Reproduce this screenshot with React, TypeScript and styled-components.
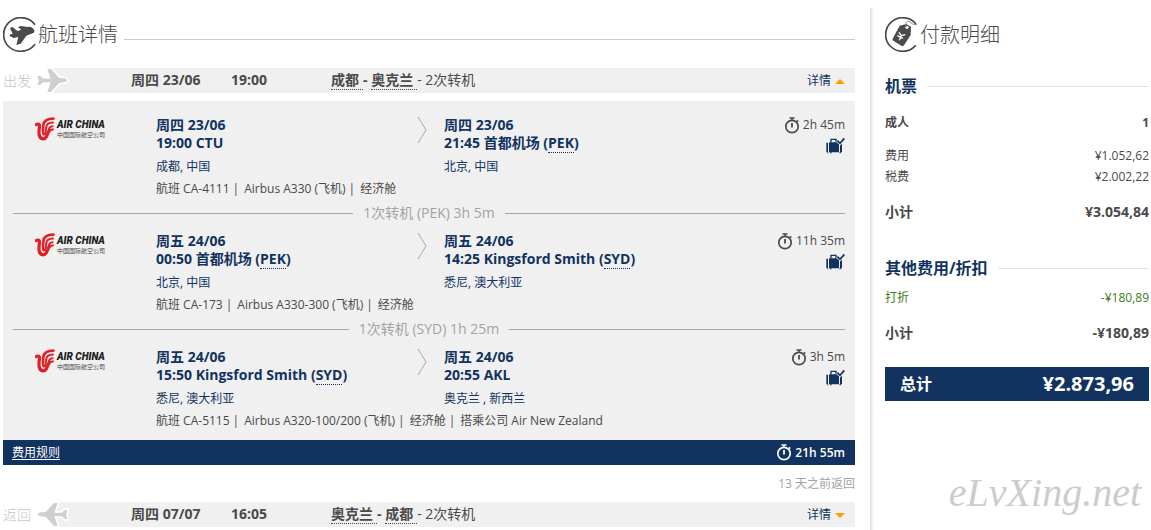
import React, { useState } from "react";
import styled, { createGlobalStyle } from "styled-components";

const navy = "#12335f";
const ink = "#4a4a4a";
const panel = "#f0f0f0";

const GlobalStyle = createGlobalStyle`
  * { box-sizing: border-box; }
  body {
    margin: 0;
    background: #fff;
    color: ${ink};
    font-family: "Open Sans", "Noto Sans CJK SC", sans-serif;
    font-size: 12px;
    line-height: 18px;
  }
`;

const Page = styled.div`
  display: grid;
  grid-template-columns: minmax(0, 1fr) 281px;
  column-gap: 15px;
  min-height: 100vh;
  padding-left: 3px;
`;

const Main = styled.main`
  padding-top: 17px;
`;

const Sidebar = styled.aside`
  margin-top: 8px;
  padding: 9px 2px 0 15px;
  background: linear-gradient(to right, #dedede, #fff) left top / 4px 100% no-repeat;
`;

const TitleRow = styled.header`
  display: flex;
  align-items: center;
  gap: 2px;
  height: 35px;
`;

const Title = styled.h1`
  margin: 0;
  font-size: 20px;
  font-weight: 300;
  line-height: 30px;
  white-space: nowrap;
`;

const TitleRule = styled.span`
  flex: 1;
  height: 1px;
  margin: 10px 0 0 4px;
  background: #ccc;
`;

const BoundRow = styled.div`
  display: flex;
  align-items: center;
  height: 25px;
  padding-right: 10px;
  background: linear-gradient(${panel}, ${panel}) right / calc(100% - 49px) 100% no-repeat;
  font-size: 14px;
  line-height: 24px;
  white-space: nowrap;
`;

const Outbound = styled(BoundRow)`
  margin-top: 16px;
`;

const Direction = styled.span`
  display: flex;
  align-items: center;
  gap: 5px;
  width: 128px;
  color: #c4c4c4;
  font-weight: 300;
`;

const When = styled.strong`
  width: 100px;
  line-height: 22px;
  padding-bottom: 2px;
`;

const Route = styled.span`
  flex: 1;
  padding-bottom: 2px;
`;

const Code = styled.abbr`
  border-bottom: 1px dotted currentColor;
  text-decoration: none;
`;

const Place = styled(Code)`
  display: inline-block;
  height: 20px;
  line-height: 20px;
  padding-right: 4px;
`;

const Toggle = styled.button<{ $open: boolean }>`
  display: flex;
  align-items: center;
  gap: 4px;
  padding: 0;
  border: 0;
  background: none;
  color: ${navy};
  font: inherit;
  font-size: 12px;
  cursor: pointer;

  &::after {
    content: "";
    margin-top: 2px;
    border: 5px solid transparent;
    border-top-width: ${(p) => (p.$open ? 0 : 5)}px;
    border-bottom-width: ${(p) => (p.$open ? 5 : 0)}px;
    border-top-color: ${(p) => (p.$open ? "transparent" : "#ff9c00")};
    border-bottom-color: ${(p) => (p.$open ? "#ff9c00" : "transparent")};
  }
`;

const Legs = styled.section`
  margin-top: 8px;
  padding: 15px 10px 10px;
  background: ${panel};
`;

const Leg = styled.article`
  display: grid;
  grid-template-columns: 143px minmax(0, 288fr) minmax(0, 401fr);
`;

const Carrier = styled.div`
  padding-left: 22px;
`;

const Departure = styled.div`
  display: flex;
  justify-content: space-between;
  padding-right: 17px;
`;

const Arrival = styled.div`
  display: flex;
  justify-content: space-between;
`;

const Stop = styled.p`
  margin: 0;
  color: ${navy};
  font-size: 14px;
  font-weight: 700;
`;

const City = styled.p`
  margin: 6px 0 0;
  color: ${navy};
`;

const Facts = styled.div`
  display: flex;
  flex-direction: column;
  align-items: flex-end;
  gap: 3px;
`;

const Time = styled.span`
  display: flex;
  align-items: center;
  gap: 3px;
  height: 18px;
  white-space: nowrap;
`;

const FlightLine = styled.p`
  grid-column: 2 / -1;
  margin: 4px 0 0;
`;

const Part = styled.span`
  & + &::before {
    content: "|";
    margin: 0 5px 0 3px;
  }
`;

const Transfer = styled.div`
  display: flex;
  align-items: center;
  gap: 10px;
  height: 18px;
  margin: 6px 0 10px;
  color: #a3a3a3;
  font-size: 14px;

  &::before,
  &::after {
    content: "";
    flex: 1;
    height: 1px;
    background: #a3a3a3;
  }
`;

const Summary = styled.footer`
  display: flex;
  align-items: center;
  justify-content: space-between;
  height: 25px;
  padding: 0 10px 0 9px;
  background: ${navy};
  color: #fff;
  font-weight: 600;
`;

const RulesLink = styled.a`
  color: #fff;
  font-weight: 400;
  text-underline-offset: 2px;
`;

const Gap = styled.p`
  margin: 10px 0 9px;
  color: #a3a3a3;
  text-align: right;
`;

const GroupTitle = styled.h2`
  display: flex;
  align-items: center;
  gap: 10px;
  margin: 22px 0 13px;
  color: ${navy};
  font-size: 16px;
  font-weight: 700;
  line-height: 24px;
  white-space: nowrap;

  &::after {
    content: "";
    flex: 1;
    height: 1px;
    background: #e4e4e4;
  }
`;

const FeeTitle = styled(GroupTitle)`
  margin: 32px 0 7px;
`;

const Prices = styled.table`
  width: 100%;
  border-collapse: collapse;
`;

type Kind = "head" | "item" | "discount" | "sum";

const PriceRow = styled.tr<{ $kind: Kind }>`
  color: ${(p) => (p.$kind === "discount" ? "#3a7d1c" : ink)};
  font-size: ${(p) => (p.$kind === "sum" ? 14 : 12)}px;
  font-weight: ${(p) => (p.$kind === "head" || p.$kind === "sum" ? 700 : 400)};
  line-height: ${(p) => (p.$kind === "head" || p.$kind === "sum" ? 24 : 21)}px;

  th, td {
    padding: ${(p) => (p.$kind === "sum" ? "13px 0 0" : p.$kind === "head" ? "0 0 10px" : "0")};
    font-weight: inherit;
    text-align: left;
  }
  td { text-align: right; }
`;

const Total = styled.div`
  display: flex;
  align-items: center;
  justify-content: space-between;
  height: 34px;
  margin-top: 22px;
  padding: 0 15px;
  background: ${navy};
  color: #fff;
  font-size: 16px;
  font-weight: 700;
`;

const TotalAmount = styled.span`
  font-size: 20px;
`;

const Signature = styled.p`
  margin: 68px 8px 0 0;
  color: #ccc;
  font-family: "Liberation Serif", serif;
  font-size: 40px;
  font-style: italic;
  line-height: 48px;
  text-align: right;
`;

const FlightBadge = () => (
  <svg width="33" height="35" viewBox="0 0 99 105" fill="none" aria-hidden="true">
    <path d="M96 23C86 9 70 2 53 2C25 2 2 25 2 53S25 103 53 103C70 103 86 95 96 82" stroke="#4a4a4a" strokeWidth="5" />
    <path d="M21 33l8-3 14 12 12-4-10-7 8-4 22 3c8-3 14 2 18 8 3 5 1 9-4 11l-19 7-17 24-13 4 6-24-14 3-12-6 1-5 8-1z" fill="#4a4a4a" />
  </svg>
);

const TagBadge = () => (
  <svg width="33" height="35" viewBox="0 0 99 105" fill="none" aria-hidden="true">
    <path d="M93 21C83 8 70 2 53 2C25 2 2 25 2 53S25 103 53 103C70 103 83 97 92 85" stroke="#4a4a4a" strokeWidth="5" />
    <path d="M44 26l20-5 14 8-1 25-20 31c-2 3-5 3-8 1L25 71c-3-2-3-5-1-8z" fill="#4a4a4a" />
    <circle cx="66" cy="31" r="5" fill="#fff" />
    <path d="M66 31c-6-8-4-18 4-18s8 8 16 9l10 1" stroke="#8a8a8a" strokeWidth="3" />
    <path d="M42 46l7 10 12-3M49 56l-6 14M37 56l17 8" stroke="#fff" strokeWidth="4" />
  </svg>
);

const Plane = ({ back = false }: { back?: boolean }) => (
  <svg width="33" height="25" viewBox="0 0 99 75" aria-hidden="true">
    <path
      transform={back ? "translate(99 0) scale(-1 1)" : undefined}
      d="M4 24h8l10 8h22L34 3h11l25 27 14 1c6 1 9 3 9 6s-3 5-9 6l-14 1-25 28H34l10-29H22l-10 8H4l5-13z"
      fill="#cfcfcf"
      stroke="#fff"
      strokeWidth="10"
      strokeLinejoin="round"
      paintOrder="stroke"
    />
  </svg>
);

const Stopwatch = ({ color = "#4a4a4a" }: { color?: string }) => (
  <svg width="16" height="17" viewBox="0 0 16 17" fill="none" stroke={color} aria-hidden="true">
    <circle cx="8" cy="9.500" r="6.200" strokeWidth="1.700" />
    <path d="M5.500 1h5M8 1v2.400M12.700 3.400l1.600 1.200" strokeWidth="1.600" />
    <path d="M8 6v4.600" strokeWidth="1.800" />
  </svg>
);

const Luggage = () => (
  <svg width="19" height="17" viewBox="0 0 57 51" aria-hidden="true">
    <path d="M1 17h5v29H1z M9 16h30v30H9z M42 24l6-4v26h-6z" fill={navy} />
    <path d="M4 46h3v3H4z M40 46h5v3h-5z M12 46h5v3h-5z" fill={navy} />
    <path d="M15 16V7h15v9" fill="none" stroke={navy} strokeWidth="4" />
    <path d="M34 11l8 8L55 4" fill="none" stroke={panel} strokeWidth="9" />
    <path d="M34 11l8 8L55 4" fill="none" stroke={navy} strokeWidth="5" />
  </svg>
);

const Chevron = () => (
  <svg width="10" height="28" viewBox="0 0 10 28" fill="none" stroke="#a8a8a8" aria-hidden="true">
    <path d="M1 1l8 13-8 13" />
  </svg>
);

const AirChina = () => (
  <svg width="72" height="26" viewBox="0 0 72 26" role="img" aria-label="Air China">
    <g fill="none" stroke="#e01f26" strokeLinecap="round">
      <path d="M1.200 8.600C3 7.400 5 8 4.500 10.800C3.800 15.500 3 22.500 8 22.800C13 22.900 11.800 16.500 14.400 14.600" strokeWidth="3.200" />
      <path d="M18.500 2.600C12.500 2.600 8.800 4.200 8.400 9C8.200 12 7.200 17.500 8.800 18.200" strokeWidth="2.600" />
      <path d="M18 6.400C13.500 6.400 11.400 8 11.200 11.500C11 14 11 16 10 18.200M17.600 10.200C14.800 10.500 14 12 13.600 14.500M14 14.600C15.500 13.800 16.800 13.900 18 13.400" strokeWidth="2" />
    </g>
    <text x="22" y="12" fill="#222" fontFamily="Roboto, sans-serif" fontSize="10" fontStyle="italic" fontWeight="900">AIR CHINA</text>
    <text x="22" y="21" fill="#444" fontFamily="'Noto Sans CJK SC', sans-serif" fontSize="6">中国国际航空公司</text>
  </svg>
);

interface StopInfo { date: string; time: string; place?: string; code?: string; city: string; }
interface LegInfo { from: StopInfo; to: StopInfo; duration: string; flight: string[]; transfer?: string; }

const legs: LegInfo[] = [
  {
    from: { date: "周四 23/06", time: "19:00 CTU", city: "成都, 中国" },
    to: { date: "周四 23/06", time: "21:45", place: "首都机场", code: "PEK", city: "北京, 中国" },
    duration: "2h 45m",
    flight: ["航班 CA-4111", "Airbus A330 (飞机)", "经济舱"],
    transfer: "1次转机 (PEK) 3h 5m",
  },
  {
    from: { date: "周五 24/06", time: "00:50", place: "首都机场", code: "PEK", city: "北京, 中国" },
    to: { date: "周五 24/06", time: "14:25", place: "Kingsford Smith", code: "SYD", city: "悉尼, 澳大利亚" },
    duration: "11h 35m",
    flight: ["航班 CA-173", "Airbus A330-300 (飞机)", "经济舱"],
    transfer: "1次转机 (SYD) 1h 25m",
  },
  {
    from: { date: "周五 24/06", time: "15:50", place: "Kingsford Smith", code: "SYD", city: "悉尼, 澳大利亚" },
    to: { date: "周五 24/06", time: "20:55 AKL", city: "奥克兰 , 新西兰" },
    duration: "3h 5m",
    flight: ["航班 CA-5115", "Airbus A320-100/200 (飞机)", "经济舱", "搭乘公司 Air New Zealand"],
  },
];

const StopBlock = ({ stop }: { stop: StopInfo }) => (
  <div>
    <Stop>{stop.date}</Stop>
    <Stop>
      {stop.time}
      {stop.code && <> {stop.place} (<Code>{stop.code}</Code>)</>}
    </Stop>
    <City>{stop.city}</City>
  </div>
);

const Price = ({ kind, label, value }: { kind: Kind; label: string; value: string }) => (
  <PriceRow $kind={kind}>
    <th scope="row">{label}</th>
    <td>{value}</td>
  </PriceRow>
);

export default function App() {
  const [open, setOpen] = useState(true);
  const [returnOpen, setReturnOpen] = useState(false);

  return (
    <>
      <GlobalStyle />
      <Page>
        <Main>
          <TitleRow>
            <FlightBadge />
            <Title>航班详情</Title>
            <TitleRule />
          </TitleRow>

          <Outbound>
            <Direction>出发 <Plane /></Direction>
            <When>周四 23/06</When>
            <When>19:00</When>
            <Route>
              <strong><Place>成都</Place>- <Place>奥克兰</Place></strong>- 2次转机
            </Route>
            <Toggle $open={open} aria-expanded={open} onClick={() => setOpen(!open)}>详情</Toggle>
          </Outbound>

          {open && (
            <Legs>
              {legs.map((leg) => (
                <React.Fragment key={leg.duration}>
                  <Leg>
                    <Carrier><AirChina /></Carrier>
                    <Departure>
                      <StopBlock stop={leg.from} />
                      <Chevron />
                    </Departure>
                    <Arrival>
                      <StopBlock stop={leg.to} />
                      <Facts>
                        <Time><Stopwatch />{leg.duration}</Time>
                        <Luggage />
                      </Facts>
                    </Arrival>
                    <FlightLine>
                      {leg.flight.map((part) => <Part key={part}>{part}</Part>)}
                    </FlightLine>
                  </Leg>
                  {leg.transfer && <Transfer>{leg.transfer}</Transfer>}
                </React.Fragment>
              ))}
            </Legs>
          )}
          <Summary>
            <RulesLink href="#rules">费用规则</RulesLink>
            <Time><Stopwatch color="#fff" />21h 55m</Time>
          </Summary>

          <Gap>13 天之前返回</Gap>

          <BoundRow>
            <Direction>返回 <Plane back /></Direction>
            <When>周四 07/07</When>
            <When>16:05</When>
            <Route>
              <strong><Place>奥克兰</Place>- <Place>成都</Place></strong>- 2次转机
            </Route>
            <Toggle $open={returnOpen} aria-expanded={returnOpen} onClick={() => setReturnOpen(!returnOpen)}>详情</Toggle>
          </BoundRow>
        </Main>

        <Sidebar>
          <TitleRow>
            <TagBadge />
            <Title>付款明细</Title>
          </TitleRow>

          <GroupTitle>机票</GroupTitle>
          <Prices>
            <tbody>
              <Price kind="head" label="成人" value="1" />
              <Price kind="item" label="费用" value="¥1.052,62" />
              <Price kind="item" label="税费" value="¥2.002,22" />
              <Price kind="sum" label="小计" value="¥3.054,84" />
            </tbody>
          </Prices>

          <FeeTitle>其他费用/折扣</FeeTitle>
          <Prices>
            <tbody>
              <Price kind="discount" label="打折" value="-¥180,89" />
              <Price kind="sum" label="小计" value="-¥180,89" />
            </tbody>
          </Prices>

          <Total>
            总计 <TotalAmount>¥2.873,96</TotalAmount>
          </Total>

          <Signature>eLvXing.net</Signature>
        </Sidebar>
      </Page>
    </>
  );
}
